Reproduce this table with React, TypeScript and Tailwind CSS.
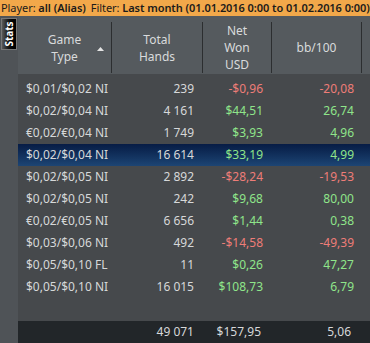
import React from "react";

const rows = [
  { game: "$0,01/$0,02 NI", hands: "239", won: "-$0,96", bb: "-20,08" },
  { game: "$0,02/$0,04 NI", hands: "4 161", won: "$44,51", bb: "26,74" },
  { game: "€0,02/€0,04 NI", hands: "1 749", won: "$3,93", bb: "4,96" },
  { game: "$0,02/$0,04 NI", hands: "16 614", won: "$33,19", bb: "4,99", selected: true },
  { game: "$0,02/$0,05 NI", hands: "2 892", won: "-$28,24", bb: "-19,53" },
  { game: "$0,02/$0,05 NI", hands: "242", won: "$9,68", bb: "80,00" },
  { game: "€0,02/€0,05 NI", hands: "6 656", won: "$1,44", bb: "0,38" },
  { game: "$0,03/$0,06 NI", hands: "492", won: "-$14,58", bb: "-49,39" },
  { game: "$0,05/$0,10 FL", hands: "11", won: "$0,26", bb: "47,27" },
  { game: "$0,05/$0,10 NI", hands: "16 015", won: "$108,73", bb: "6,79" },
];

function tone(v: string) {
  return v.startsWith("-") ? "text-[#ee7d78]" : "text-[#8fe58a]";
}

export default function App() {
  return (
    <div
      className="w-[370px] h-[343px] flex flex-col bg-[#4f5357] overflow-hidden text-[12px]"
      style={{ fontFamily: '"Noto Sans", "Open Sans", sans-serif' }}
    >
      {/* filter bar */}
      <div className="h-[16px] shrink-0 bg-[#f2a84a] text-[#1b1b1b] text-[11px] leading-[16px] pl-[1px] tracking-[-0.06px] whitespace-nowrap">
        Player: <span className="font-semibold">all (Alias)</span>
        <span className="ml-[5px]">Filter: </span>
        <span className="font-semibold">Last month (01.01.2016 0:00 to 01.02.2016 0:00)</span>
      </div>

      <div className="flex flex-1">
        {/* side tab strip */}
        <div className="w-[18px] shrink-0 pt-[2px] pl-[1px]">
          <div className="w-[16px] h-[32px] bg-gradient-to-r from-[#5a5a5a] via-[#111] to-[#000] border border-[#777] flex items-center justify-center">
            <span className="-rotate-90 text-white font-bold text-[10px] leading-none">Stats</span>
          </div>
        </div>

        <div className="flex-1 flex flex-col">
          {/* header */}
          <div className="h-[58px] shrink-0 bg-[#555a5e] text-[#d9dbdc] grid grid-cols-[94px_91px_69px_90px_1fr] leading-[17px]">
            <div className="relative flex items-center justify-center text-center border-r border-[#2c2e30] my-[6px]">
              <span>Game<br />Type</span>
              <svg className="absolute left-[79px] top-[25px]" width="7" height="4" viewBox="0 0 7 4">
                <path d="M0 4 L3.5 0 L7 4 Z" fill="#e4e4e4" />
              </svg>
            </div>
            <div className="flex items-center justify-center text-center border-r border-[#2c2e30] my-[6px]">
              <span>Total<br />Hands</span>
            </div>
            <div className="flex items-center justify-center text-center border-r border-[#2c2e30] my-[6px]">
              <span>Net<br />Won<br />USD</span>
            </div>
            <div className="flex items-center justify-center text-center border-r border-[#2c2e30] my-[6px]">
              <span>bb/100</span>
            </div>
            <div />
          </div>

          {/* body */}
          <div className="flex-1 bg-[#46494c] pt-[4px] flex flex-col">
            {rows.map((r, i) => (
              <div
                key={i}
                className={`h-[22px] grid grid-cols-[94px_91px_69px_90px_1fr] items-center text-[#d6d8d9] ${
                  r.selected ? "bg-gradient-to-b from-[#071c45] to-[#1d4574]" : ""
                }`}
              >
                <div className="pl-[8px] whitespace-nowrap">{r.game}</div>
                <div className="text-right pr-[9px]">{r.hands}</div>
                <div className={`text-right pr-[9px] ${tone(r.won)}`}>{r.won}</div>
                <div className={`text-right pr-[8px] ${tone(r.bb)}`}>{r.bb}</div>
                <div />
              </div>
            ))}
            <div className="flex-1" />
            {/* totals */}
            <div className="h-[22px] bg-[#222629] grid grid-cols-[94px_91px_69px_90px_1fr] items-center text-[#d6d8d9]">
              <div />
              <div className="text-right pr-[9px]">49 071</div>
              <div className="text-right pr-[11px]">$157,95</div>
              <div className="text-right pr-[11px]">5,06</div>
              <div />
            </div>
          </div>
        </div>
      </div>
    </div>
  );
}
